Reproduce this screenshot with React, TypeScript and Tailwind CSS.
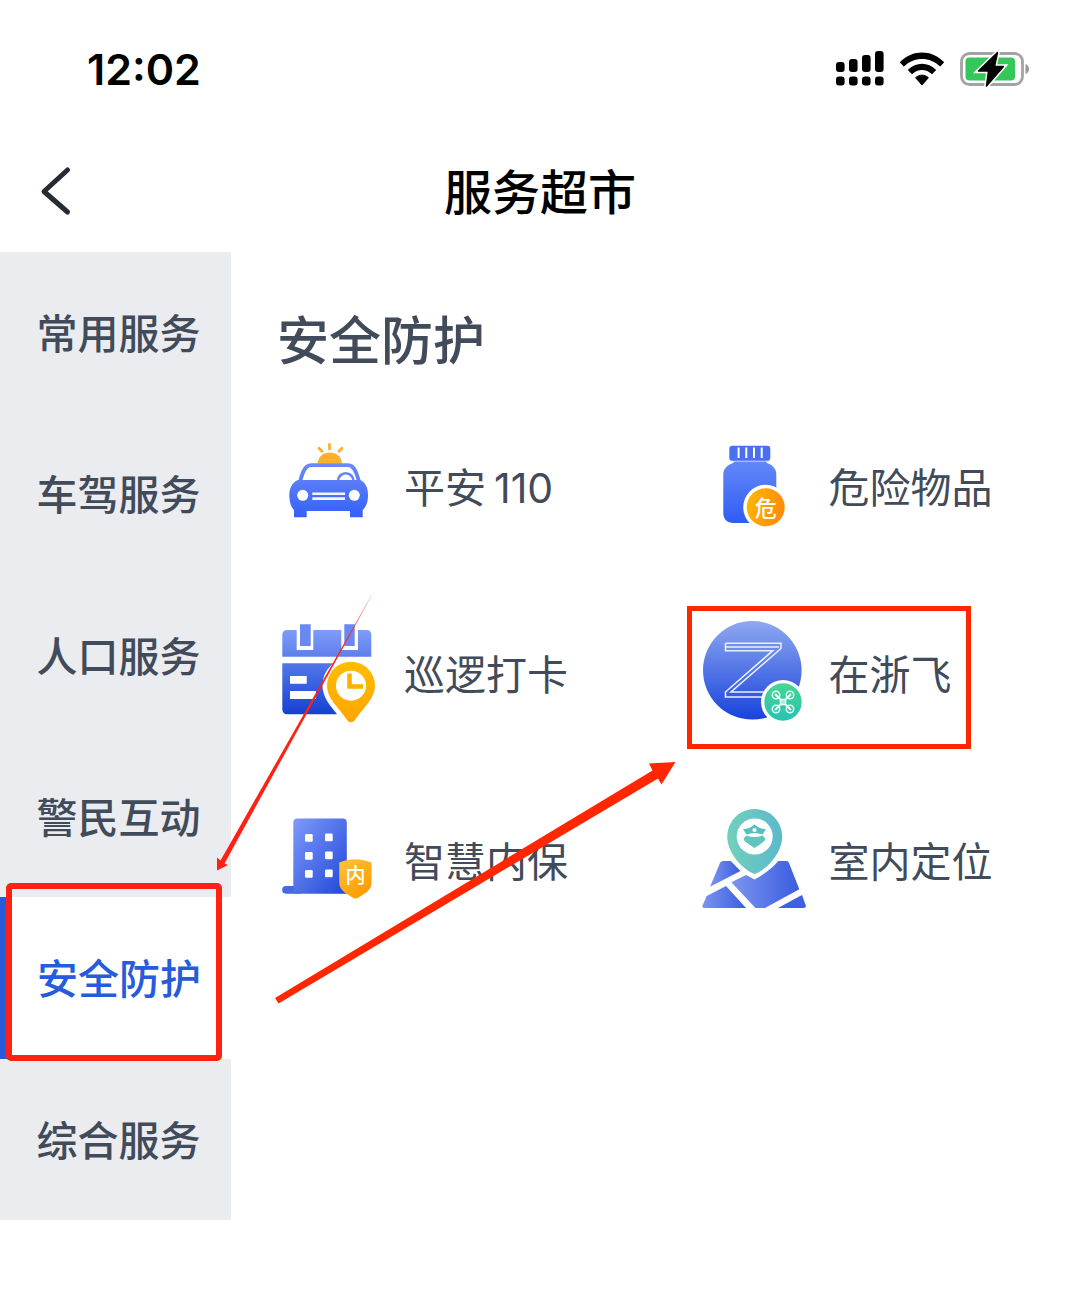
import React from "react";

const CJK = "font-['Inter','Noto_Sans_CJK_SC',sans-serif]";

function SignalIcon() {
  const xs = [0, 13, 26, 39];
  const tops = [11, 8, 4, 0];
  return (
    <svg className="h-[35px] w-[48px]" viewBox="0 0 48 35" aria-hidden="true">
      {xs.map((x, i) => (
        <g key={x}>
          <rect x={x} y={tops[i]} width="8.6" height={21 - tops[i]} rx="3" />
          <rect x={x} y="25.5" width="8.6" height="9" rx="3" />
        </g>
      ))}
    </svg>
  );
}

function WifiIcon() {
  return (
    <svg className="h-[34px] w-[46px]" viewBox="0 0 46 34" aria-hidden="true">
      <path d="M.8 10.2C13.5-2.7 32.5-2.7 45.2 10.2L41.2 14.6C31 4.3 15 4.3 4.8 14.6Z" />
      <path d="M8.8 18C17 9.8 29 9.8 37.2 18L33 22.2C27.3 16.5 18.7 16.5 13 22.2Z" />
      <path d="M16.6 25.7C20.2 22.3 25.8 22.3 29.4 25.7L23 33Z" strokeLinejoin="round" stroke="#000" strokeWidth="1" />
    </svg>
  );
}

function BatteryIcon() {
  return (
    <svg className="h-[36px] w-[70px]" viewBox="0 0 70 36" aria-hidden="true">
      <rect x="1.5" y="2.5" width="61" height="31" rx="8" fill="none" stroke="#a3a3a3" strokeWidth="2.8" />
      <path d="M65.500 13c4.700 1.500 4.700 8.500 0 10Z" fill="#999" />
      <rect x="5.5" y="6.5" width="49.5" height="23" rx="4" fill="#34c759" />
      <path d="M37.500 1.500 18.500 20H28.500L26.500 35 43.500 15.500H34.500Z" stroke="#fff" strokeWidth="4.5" />
      <path d="M37.500 1.500 18.500 20H28.500L26.500 35 43.500 15.500H34.500Z" stroke="#000" strokeWidth="1.5" strokeLinejoin="round" />
    </svg>
  );
}

function Gradient({ id, from, to, x2 = "0", y2 = "1" }: { id: string; from: string; to: string; x2?: string; y2?: string }) {
  return (
    <linearGradient id={id} x1="0" y1="0" x2={x2} y2={y2}>
      <stop offset="0" stopColor={from} />
      <stop offset="1" stopColor={to} />
    </linearGradient>
  );
}

function Frame({ children }: { children: React.ReactNode }) {
  return (
    <svg className="size-[108px] shrink-0" viewBox="0 0 108 108" aria-hidden="true">
      {children}
    </svg>
  );
}

function CarIcon() {
  return (
    <Frame>
      <defs>
        <linearGradient id="car" gradientUnits="userSpaceOnUse" x1="0" y1="30" x2="0" y2="84">
          <stop offset="0" stopColor="#6c8bf8" />
          <stop offset="1" stopColor="#3560f8" />
        </linearGradient>
      </defs>
      <path d="M42.700 30.500C43 15.800 66.500 15.800 67 30.500Z" fill="#fcae2e" />
      <path d="M54.500 11.500V16M44 15.300l3 3M67 15.300l-3 3" stroke="#fcae2e" strokeWidth="2.8" strokeLinecap="round" />
      <path d="M25 49C27 41 29.500 32.200 36 32.200H73C79.500 32.200 82 41 84 49" fill="none" stroke="url(#car)" strokeWidth="3.8" />
      <path d="M63 48a7.500 7.500 0 0 1 15.500 0" fill="none" stroke="#6384f8" strokeWidth="2.6" />
      <path d="M23 47H85C91 49.500 93 55 93 62.500C93 69 91 74 87.700 77V84.300H75V78H31.700V84.300H19V77C16 74 14.300 69 14.300 62.500C14.300 55 17 49.500 23 47Z" fill="url(#car)" />
      <circle cx="27.7" cy="62.3" r="5.5" fill="#fff" />
      <circle cx="79.3" cy="62.3" r="5.5" fill="#fff" />
      <path d="M37.300 60.700H70M37.300 65.600H70" stroke="#f3f6ff" strokeWidth="2.6" />
    </Frame>
  );
}

function BottleIcon() {
  return (
    <Frame>
      <defs>
        <Gradient id="bottle" from="#6488f8" to="#2f5cf6" />
        <Gradient id="bottle-badge" from="#ffba08" to="#ff8d00" x2="1" y2="0.3" />
      </defs>
      <rect x="29.3" y="12.7" width="41" height="15.3" rx="3" fill="#4a70f2" />
      <path d="M38.600 14.500V25M46.300 14.500V25M54 14.500V25M61.700 14.500V25" stroke="#fff" strokeWidth="2" />
      <path d="M33.500 28H66.500V29.700C73 32 76.300 36 76.300 41V90H33.500C27 90 23.300 86 23.300 80V41C23.300 36 27 32 33.500 29.700Z" fill="url(#bottle)" />
      <path d="M29 28.200H71" stroke="#dfe7ff" strokeWidth="0.8" />
      <circle cx="65.7" cy="74.3" r="22.5" fill="#fff" />
      <circle cx="65.7" cy="74.3" r="19" fill="url(#bottle-badge)" />
      <text x="65.7" y="82.5" textAnchor="middle" fill="#fff" className="font-['Noto_Sans_CJK_SC',sans-serif] text-[22px] font-medium">危</text>
    </Frame>
  );
}

function CalendarIcon() {
  const pin = "M76 102.300C73.500 102.300 72.500 100.500 71 98.500C63 87 52 78 52 65.700A24 24 0 0 1 100 65.700C100 78 89 87 81 98.500C79.500 100.500 78.500 102.300 76 102.300Z";
  return (
    <Frame>
      <defs>
        <Gradient id="cal-top" from="#7f9dfa" to="#5e7fec" />
        <Gradient id="cal-body" from="#5277ea" to="#1640d2" />
        <Gradient id="cal-pin" from="#ffbd00" to="#ffa500" />
      </defs>
      <path d="M12.300 10H91.300Q96.300 10 96.300 15V36.700H7.300V15Q7.300 10 12.300 10Z" fill="url(#cal-top)" />
      <path d="M21.700 8H38.300V30H21.700ZM66.300 8H83V30H66.300Z" fill="#fff" />
      <path d="M25 4.300H35.700V26H25ZM69.300 4.300H79.700V26H69.300Z" fill="#6a89f0" />
      <path d="M7.300 43.300H62V94.300H12.300Q7.300 94.300 7.300 89.300Z" fill="url(#cal-body)" />
      <path d="M15 56H31.700V63.700H15ZM15 71H41V79H15Z" fill="#fff" />
      <path d={pin} fill="#fff" stroke="#fff" strokeWidth="9" />
      <path d={pin} fill="url(#cal-pin)" />
      <circle cx="76" cy="65.7" r="15" fill="#fff" />
      <path d="M74.500 53.500V66.500H88" fill="none" stroke="#ffb000" strokeWidth="4.5" />
    </Frame>
  );
}

function FlyIcon() {
  return (
    <Frame>
      <defs>
        <Gradient id="fly" from="#8fa8f0" to="#1743dc" />
        <Gradient id="fly-badge" from="#46d592" to="#28c2b4" />
      </defs>
      <circle cx="52.3" cy="50.3" r="49.3" fill="url(#fly)" />
      <path d="M25.500 23.300H81V28.500L31 72H64M25.500 23.300V30.700H72.700L25.500 72V77H68M25.500 27H79" fill="none" stroke="#e9efff" strokeWidth="1.6" />
      <circle cx="83" cy="82" r="22" fill="#fff" />
      <circle cx="83" cy="82" r="18.7" fill="url(#fly-badge)" />
      <g fill="none" stroke="#e8fff8" strokeWidth="1.5">
        <circle cx="76" cy="75" r="3.7" />
        <circle cx="90" cy="75" r="3.7" />
        <circle cx="76" cy="89" r="3.7" />
        <circle cx="90" cy="89" r="3.7" />
        <path d="M75 74L91 90M91 74L75 90" strokeWidth="2" />
        <rect x="80.5" y="79.5" width="5" height="5" rx="1" fill="#a5ecd3" />
      </g>
    </Frame>
  );
}

function BuildingIcon() {
  return (
    <Frame>
      <defs>
        <Gradient id="bld" from="#7f9afa" to="#1f47d8" x2="1" />
        <Gradient id="bld-shield" from="#ffc43c" to="#ff9c00" x2="0.6" />
      </defs>
      <path d="M11 79H26V86.700H11A3.800 3.800 0 0 1 11 79Z" fill="#4568e6" />
      <path d="M22.300 11.500H67.800Q71.800 11.500 71.800 15.500V86.700H18.300V15.500Q18.300 11.500 22.300 11.500Z" fill="url(#bld)" />
      {[27, 45, 63].map((y) => (
        <g key={y} fill="#fff">
          <rect x="30" y={y} width="7.7" height="7.7" rx="1.2" />
          <rect x="50" y={y - 0.5} width="7.7" height="7.7" rx="1.2" />
        </g>
      ))}
      <path d="M80.500 52.300Q88 52.300 96.500 55.500V76C96.500 84 88 87.500 82.500 91Q80.500 92 78.500 91C73 87.500 64.300 84 64.300 76V55.500Q73 52.300 80.500 52.300Z" fill="url(#bld-shield)" />
      <text x="80.5" y="76" textAnchor="middle" fill="#fff" className="font-['Noto_Sans_CJK_SC',sans-serif] text-[20px] font-medium">内</text>
    </Frame>
  );
}

function MapIcon() {
  return (
    <Frame>
      <defs>
        <Gradient id="map" from="#7b96ee" to="#3a5ce0" x2="1" y2="0" />
        <Gradient id="map-pin" from="#71d0bc" to="#5bbacb" x2="1" y2="0" />
      </defs>
      <path d="M20 56Q21 54 23 54H30.700L40.500 64L10 79.700Z" fill="url(#map)" />
      <path d="M6.700 89L26 79L46 101H4.500Q1.800 101 2.500 98.500Z" fill="url(#map)" />
      <path d="M31.300 75.300L46 68L54.500 72.500Q70 64 78.300 54H86.500Q88.300 54 89 56L99.300 82.300L65 101H55.500Z" fill="url(#map)" />
      <path d="M78 101L102 88L105.800 98.500Q106 101 103.500 101Z" fill="#3e60e1" />
      <path d="M54.700 67C43 63 27.200 46 27.200 29.500A27.500 27.500 0 0 1 82.200 29.500C82.200 46 66.500 63 54.700 67Z" fill="url(#map-pin)" />
      <circle cx="54.7" cy="29.5" r="18" fill="#fff" />
      <path d="M54.500 17.500C57.500 20 61.500 22.300 66 22L62.500 27.500Q54.500 24.500 46.500 27.500L43 22C47.500 22.300 51.500 20 54.500 17.500Z" fill="#58bfc0" />
      <circle cx="54.5" cy="23" r="2.1" fill="#fff" />
      <path d="M46.500 28.500Q54.500 31.500 62.500 28.500L65.500 31.500Q65 34 62.500 35.500Q59.500 38 54.500 41Q49.500 38 46.500 35.500Q44 34 43.500 31.500Z" fill="#60c6bd" />
    </Frame>
  );
}

const categories = ["常用服务", "车驾服务", "人口服务", "警民互动", "安全防护", "综合服务"];

const services = [
  { label: "平安", number: "110", Icon: CarIcon },
  { label: "危险物品", Icon: BottleIcon },
  { label: "巡逻打卡", Icon: CalendarIcon },
  { label: "在浙飞", Icon: FlyIcon, marked: true },
  { label: "智慧内保", Icon: BuildingIcon },
  { label: "室内定位", Icon: MapIcon },
];

export default function App() {
  return (
    <div className={`min-h-screen bg-white pb-20 text-[#414b5a] ${CJK}`}>
      <div className="flex h-[132px] items-center justify-between pt-[5px] pr-[50px] pl-[87px] text-black">
        <time className="text-[43px] leading-[56px] font-semibold">12:02</time>
        <div className="flex items-center gap-[15px]">
          <SignalIcon />
          <WifiIcon />
          <BatteryIcon />
        </div>
      </div>

      <header className="grid h-[120px] grid-cols-[1fr_auto_1fr] items-center">
        <button type="button" aria-label="返回" className="w-fit pb-[2px] pl-10">
          <svg className="h-[50px] w-[32px]" viewBox="0 0 32 50" fill="none" aria-hidden="true">
            <path d="M27.500 4L4 25.500L27.500 46" stroke="#272b34" strokeWidth="5" strokeLinecap="round" strokeLinejoin="round" />
          </svg>
        </button>
        <h1 className="pt-[2px] text-[48px] leading-[64px] font-medium text-black">服务超市</h1>
      </header>

      <div className="relative flex items-start">
        <nav aria-label="服务分类" className="grid min-h-[968px] w-[231px] shrink-0 auto-rows-fr bg-[#ebecf0] text-[41px] font-medium">
          {categories.map((name) =>
            name === "安全防护" ? (
              <button key={name} type="button" aria-current="true" className="relative border-l-[7px] border-[#265bdc] bg-white pt-1 text-[#265bdc]">
                {name}
                <span className="absolute -top-[14px] right-[9px] -bottom-[2px] -left-px rounded-[5px] border-[6px] border-[#ff2113]" />
              </button>
            ) : (
              <button key={name} type="button" className="pt-1 pl-[6px]">
                {name}
              </button>
            ),
          )}
        </nav>

        <main className="min-w-0 flex-1 pt-14">
          <h2 className="pl-[46px] text-[52px] leading-[68px] font-medium">安全防护</h2>
          <ul className="grid auto-rows-[187px] grid-cols-2 pt-[17px]">
            {services.map(({ label, number, Icon, marked }) => (
              <li key={label} className="relative">
                <a href="#" className="flex h-full items-center gap-[21px] pl-[44px] text-[41px] whitespace-nowrap">
                  <Icon />
                  <span className="pt-1">
                    {label}
                    {number && <span className="ml-2">{number}</span>}
                  </span>
                </a>
                {marked && <span className="pointer-events-none absolute top-[26px] left-[31px] h-[143px] w-[284px] border-[5px] border-[#ff2600]" />}
              </li>
            ))}
          </ul>
        </main>

        <svg className="pointer-events-none absolute top-[344px] left-[215px] h-[410px] w-[462px]" viewBox="215 596 462 410" aria-hidden="true">
          <defs>
            <linearGradient id="fade" gradientUnits="userSpaceOnUse" x1="371" y1="596" x2="340" y2="650">
              <stop offset="0" stopColor="#ff2113" stopOpacity="0.4" />
              <stop offset="1" stopColor="#ff2113" />
            </linearGradient>
          </defs>
          <path d="M371.500 596L371 596L220.500 860.500L217 857.500V870.500L228 865L224.500 863.500Z" fill="url(#fade)" />
          <path d="M275 998L652.500 770.500L649 763.500L675.500 762L661.500 784.500L658 778.500L278.500 1003.500Z" fill="#ff2600" />
        </svg>
      </div>
    </div>
  );
}
